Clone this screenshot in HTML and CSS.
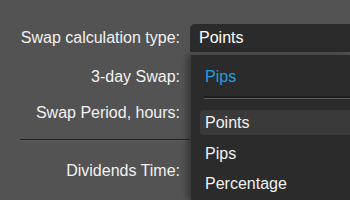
FILE: index.html
```html
<!DOCTYPE html>
<html>
<head>
<meta charset="utf-8">
<link rel="stylesheet" href="styles.css">
</head>
<body>
<div class="form">
  <div class="row row-first">
    <div class="label">Swap calculation type:</div>
    <div class="select">Points</div>
  </div>
  <div class="row row-2">
    <div class="label">3-day Swap:</div>
  </div>
  <div class="row row-3">
    <div class="label">Swap Period, hours:</div>
  </div>
  <div class="sep"></div>
  <div class="row row-4">
    <div class="label">Dividends Time:</div>
  </div>
  <div class="dropdown">
    <div class="item selected">Pips</div>
    <div class="menu-sep"></div>
    <div class="item hover">Points</div>
    <div class="item">Pips</div>
    <div class="item">Percentage</div>
  </div>
</div>
</body>
</html>
```
FILE: styles.css
```css
html, body {
  margin: 0;
  padding: 0;
  background: #535353;
  width: 350px;
  height: 200px;
  overflow: hidden;
}
.form {
  position: relative;
  height: 200px;
  box-sizing: border-box;
  font-family: "Liberation Sans", Arial, sans-serif;
  font-size: 16px;
  color: #f2f2f2;
  padding-top: 24px;
  overflow: hidden;
}
.row {
  display: grid;
  grid-template-columns: 180px 1fr;
  column-gap: 10px;
  align-items: center;
}
.row-first { height: 28px; }
.row-2 { height: 46px; margin-top: 2px; }
.row-3 { height: 25px; }
.label {
  text-align: right;
  white-space: nowrap;
  margin-left: -1px;
}
.select {
  background: #2b2b2b;
  height: 28px;
  line-height: 28px;
  padding-left: 9px;
  border-radius: 5px 0 0 0;
  color: #ffffff;
}
.sep {
  margin: 14px 160px 0 20px;
  height: 1px;
  background: #1f1f1f;
  border-bottom: 1px solid #5c5c5c;
}
.row-4 { height: 56px; padding-top: 2px; }
.dropdown {
  position: absolute;
  left: 191px;
  right: 0;
  top: 55px;
  bottom: 0;
  background: #2b2b2b;
  box-shadow: -4px 0 6px rgba(0,0,0,0.35);
  padding: 10px 0 0 9px;
  box-sizing: border-box;
  overflow: hidden;
}
.item {
  height: 30px;
  line-height: 30px;
  padding-left: 5px;
  color: #f2f2f2;
  white-space: nowrap;
}
.item.selected {
  color: #1f9fe3;
  height: 24px;
  line-height: 24px;
}
.menu-sep {
  margin: 7px 0 11px 4px;
  height: 2px;
  background: #1e1e1e;
  border-bottom: 1px solid #5a5a5a;
}
.item.hover {
  background: #3a3a3a;
  border-radius: 4px 0 0 4px;
  height: 25px;
  line-height: 25px;
  margin-bottom: 4px;
}
```
